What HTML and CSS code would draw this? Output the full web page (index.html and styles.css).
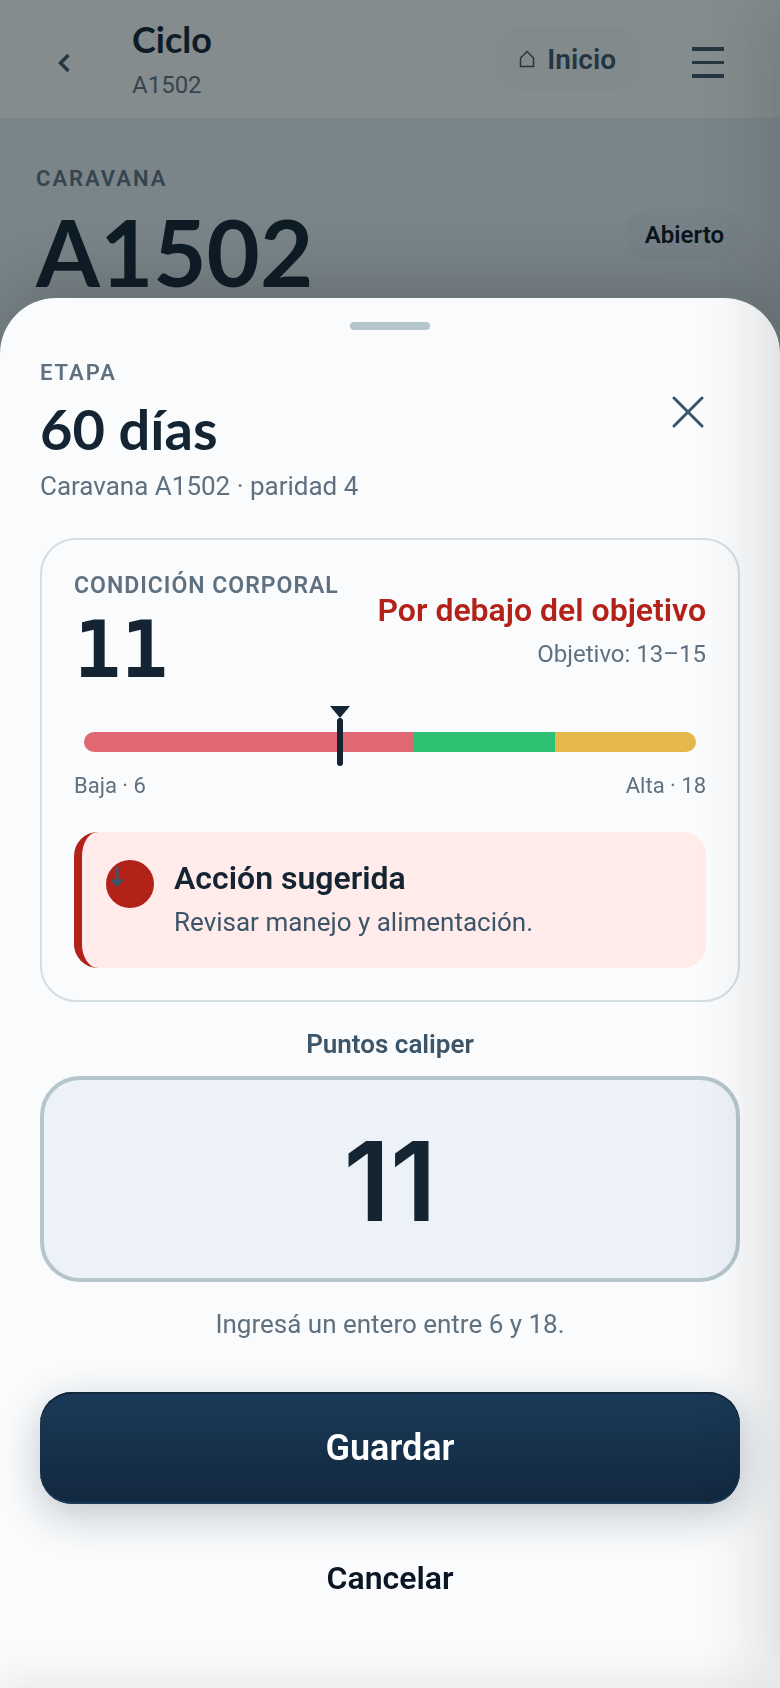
FILE: index.html
```html
<!DOCTYPE html>
<html lang="es">

<head>
    <meta charset="utf-8">
    <meta name="viewport" content="width=device-width, initial-scale=1">
    <title>Ciclo A1502</title>
    <link rel="stylesheet" href="styles.css">
</head>

<body>
    <div class="page">
        <header class="topbar">
            <button type="button" class="icon-button" aria-label="Volver">
                <svg width="12" height="18" viewBox="0 0 12 18" fill="none" stroke="currentColor" stroke-width="3.500">
                    <path d="M10.500 1 2.500 9l8 8" />
                </svg>
            </button>
            <div class="topbar-title">
                <h1>Ciclo</h1>
                <p>A1502</p>
            </div>
            <a class="home-link" href="#inicio">
                <svg width="16" height="18" viewBox="0 0 16 18" fill="none" stroke="currentColor" stroke-width="1.500">
                    <path d="M1.500 16.500V8L8 1.500 14.500 8v8.500z" />
                </svg>
                Inicio
            </a>
            <button type="button" class="icon-button" aria-label="Men&uacute;">
                <svg width="32" height="32" viewBox="0 0 32 32" stroke="currentColor" stroke-width="4">
                    <path d="M0 2h32M0 29h32" />
                    <path d="M0 15.500h32" stroke-width="3" />
                </svg>
            </button>
        </header>
        <main class="hero">
            <div>
                <p class="eyebrow">Caravana</p>
                <h2>A1502</h2>
            </div>
            <span class="status">Abierto</span>
        </main>
    </div>

    <div class="backdrop"></div>

    <section class="sheet" role="dialog" aria-labelledby="sheet-title">
        <div class="handle"></div>
        <div class="sheet-header">
            <div>
                <p class="eyebrow">Etapa</p>
                <h2 id="sheet-title">60 d&iacute;as</h2>
                <p class="subtitle">Caravana A1502 &middot; paridad 4</p>
            </div>
            <button type="button" class="close" aria-label="Cerrar">
                <svg width="32" height="32" viewBox="0 0 32 32" stroke="currentColor" stroke-width="3"
                    stroke-linecap="round">
                    <path d="M2 2l28 28M30 2L2 30" />
                </svg>
            </button>
        </div>

        <div class="card">
            <div class="card-head">
                <div>
                    <p class="card-label">Condici&oacute;n corporal</p>
                    <p class="score">11</p>
                </div>
                <div class="result">
                    <p class="result-title">Por debajo del objetivo</p>
                    <p class="result-target">Objetivo: 13&ndash;15</p>
                </div>
            </div>

            <div class="gauge">
                <div class="track">
                    <span class="low"></span>
                    <span class="ok"></span>
                    <span class="high"></span>
                    <div class="marker" style="left: 41.67%"></div>
                </div>
            </div>
            <div class="scale">
                <span>Baja &middot; 6</span>
                <span>Alta &middot; 18</span>
            </div>

            <div class="alert">
                <div class="alert-icon">
                    <svg width="12" height="20" viewBox="0 0 12 20" fill="currentColor">
                        <path d="M4.500 0h3v12.500l4.500-.500v2L6 20 0 14v-2l4.500.500z" />
                    </svg>
                </div>
                <div>
                    <p class="alert-title">Acci&oacute;n sugerida</p>
                    <p class="alert-text">Revisar manejo y alimentaci&oacute;n.</p>
                </div>
            </div>
        </div>

        <form class="form">
            <label for="points">Puntos caliper</label>
            <input id="points" type="text" inputmode="numeric" value="11" aria-describedby="points-hint">
            <p id="points-hint" class="hint">Ingres&aacute; un entero entre 6 y 18.</p>
            <button type="submit" class="save">Guardar</button>
            <button type="button" class="cancel">Cancelar</button>
        </form>
    </section>

    <div class="drawer"></div>
    <div class="dock"></div>
</body>

</html>
```
FILE: styles.css
```css
:root {
    --ink: #142433;
    --ink-soft: #3d5568;
    --muted: #5f7180;
    --line: #b5c5cc;
    --surface: #f9fbfc;
    --danger: #b32218;
}

* {
    box-sizing: border-box;
}

body {
    font-family: Roboto, "Liberation Sans", sans-serif;
    margin: 0;
    min-height: 100vh;
    background-color: #e2ebf0;
    color: var(--ink);
    overflow: hidden;
}

h1,
h2,
p {
    margin: 0;
}

button {
    font-family: inherit;
    border: none;
    background: none;
    padding: 0;
    cursor: pointer;
}

svg {
    display: block;
}

.topbar {
    display: flex;
    align-items: center;
    height: 118px;
    padding: 0 24px 0 16px;
    background-color: #f5fafa;
}

.icon-button {
    display: flex;
    align-items: center;
    justify-content: center;
    width: 96px;
    height: 96px;
    margin-top: 8px;
    color: var(--ink-soft);
}

.topbar-title {
    flex: 1;
    padding: 4px 0 0 20px;
}

.topbar-title h1 {
    font-family: Lato, sans-serif;
    font-size: 36px;
    line-height: 48px;
}

.topbar-title p {
    font-size: 24px;
    line-height: 44px;
    color: var(--muted);
}

.home-link {
    display: flex;
    align-items: center;
    gap: 12px;
    height: 64px;
    margin-right: 20px;
    padding: 0 24px;
    border-radius: 24px;
    background-color: #f2f6f6;
    color: var(--ink-soft);
    font-size: 28px;
    font-weight: 600;
    text-decoration: none;
}

.hero {
    display: flex;
    align-items: center;
    justify-content: space-between;
    padding: 44px 36px;
}

.eyebrow {
    font-size: 22px;
    line-height: 34px;
    font-weight: 600;
    letter-spacing: 2px;
    text-transform: uppercase;
    color: var(--muted);
}

.hero h2 {
    font-family: Lato, sans-serif;
    font-size: 92px;
    line-height: 112px;
}

.status {
    padding: 8px 20px;
    border-radius: 28px;
    background-color: #dde6ee;
    color: #0b1624;
    font-size: 24px;
    line-height: 36px;
    font-weight: 600;
}

.backdrop {
    position: fixed;
    inset: 0;
    background-color: rgba(8, 20, 26, 0.48);
}

.sheet {
    position: fixed;
    left: 0;
    right: 0;
    bottom: 0;
    padding: 24px 40px 60px;
    border-radius: 56px 56px 0 0;
    background-color: var(--surface);
    box-shadow: 0 -16px 64px rgba(20, 20, 20, 0.2);
}

.handle {
    width: 80px;
    height: 8px;
    margin: 0 auto 26px;
    border-radius: 4px;
    background-color: var(--line);
}

.sheet-header {
    display: flex;
    justify-content: space-between;
    align-items: flex-start;
    margin-bottom: 34px;
}

.sheet-header h2 {
    margin: 6px 0;
    font-family: Lato, sans-serif;
    font-size: 56px;
    line-height: 66px;
}

.subtitle {
    font-size: 26px;
    line-height: 36px;
    color: var(--muted);
}

.close {
    display: flex;
    align-items: center;
    justify-content: center;
    width: 104px;
    height: 112px;
    color: var(--ink-soft);
}

.card {
    padding: 32px;
    border: 2px solid #d3dde2;
    border-radius: 36px;
}

.card-head {
    display: flex;
    justify-content: space-between;
    align-items: center;
}

.card-label {
    font-size: 23px;
    line-height: 28px;
    font-weight: 600;
    letter-spacing: 1px;
    text-transform: uppercase;
    color: var(--muted);
}

.score {
    margin-top: 12px;
    font-family: "DejaVu Sans Mono", monospace;
    font-size: 78px;
    line-height: 76px;
    font-weight: 700;
}

.result {
    text-align: right;
}

.result-title {
    font-size: 32px;
    line-height: 40px;
    font-weight: 600;
    color: var(--danger);
}

.result-target {
    margin-top: 8px;
    font-size: 24px;
    line-height: 32px;
    color: var(--muted);
}

.gauge {
    padding: 44px 10px 16px;
}

.track {
    position: relative;
    display: grid;
    grid-template-columns: 7fr 3fr 3fr;
    height: 20px;
}

.low {
    border-radius: 10px 0 0 10px;
    background-color: #e06872;
}

.ok {
    background-color: #2dc073;
}

.high {
    border-radius: 0 10px 10px 0;
    background-color: #e5b84d;
}

.marker {
    position: absolute;
    top: -14px;
    width: 6px;
    height: 48px;
    margin-left: -2px;
    border-radius: 3px;
    background-color: var(--ink);
}

.marker::before {
    content: "";
    position: absolute;
    left: -7px;
    top: -12px;
    border: 10px solid transparent;
    border-top: 12px solid var(--ink);
    border-bottom: 0;
}

.scale {
    display: flex;
    justify-content: space-between;
    margin-top: 4px;
    font-size: 22px;
    line-height: 28px;
    color: var(--muted);
}

.alert {
    display: flex;
    gap: 20px;
    margin-top: 32px;
    padding: 28px 24px;
    border-left: 8px solid var(--danger);
    border-radius: 24px;
    background-color: #feebea;
}

.alert-icon {
    width: 48px;
    height: 48px;
    padding: 7px 5px;
    border-radius: 50%;
    background-color: var(--danger);
    color: var(--ink-soft);
}

.alert-title {
    margin-bottom: 8px;
    font-size: 32px;
    line-height: 36px;
    font-weight: 600;
}

.alert-text {
    font-size: 26px;
    line-height: 36px;
    color: var(--ink-soft);
}

.form {
    display: flex;
    flex-direction: column;
    margin-top: 24px;
    text-align: center;
}

.form label {
    font-size: 26px;
    line-height: 36px;
    font-weight: 600;
    color: var(--ink-soft);
}

.form input {
    width: 100%;
    height: 206px;
    margin-top: 14px;
    padding: 20px 16px 16px;
    border: 4px solid var(--line);
    border-radius: 40px;
    background-color: #edf2f9;
    color: var(--ink);
    font-family: Inter, sans-serif;
    font-size: 110px;
    font-weight: 600;
    text-align: center;
}

.hint {
    margin-top: 24px;
    font-size: 26px;
    line-height: 36px;
    color: var(--muted);
}

.save {
    height: 112px;
    margin-top: 50px;
    border-radius: 32px;
    background: linear-gradient(#1b3a57, #12283f);
    box-shadow: inset 0 2px #14283c, inset 0 -2px #1b3a57, 0 12px 40px rgba(18, 35, 60, 0.24);
    color: #fff;
    font-size: 36px;
    font-weight: 600;
}

.cancel {
    height: 100px;
    margin-top: 24px;
    color: #0b1624;
    font-size: 32px;
    font-weight: 600;
}

.drawer {
    position: fixed;
    top: 0;
    bottom: 0;
    left: 100%;
    width: 320px;
    box-shadow: -16px 0 64px rgba(20, 20, 20, 0.14);
}

.dock {
    position: fixed;
    top: 100%;
    left: 0;
    right: 0;
    height: 120px;
    box-shadow: 0 -4px 48px rgba(20, 20, 20, 0.1);
}
```
